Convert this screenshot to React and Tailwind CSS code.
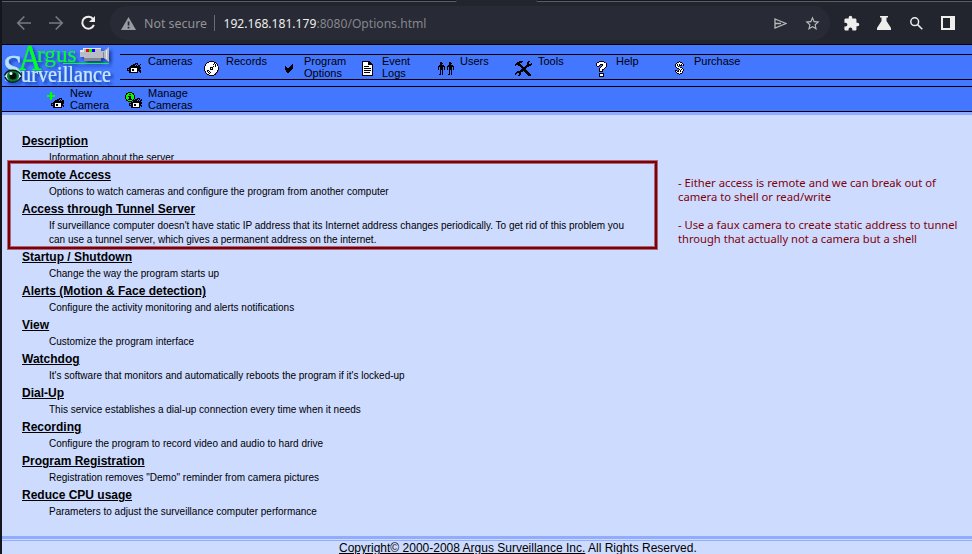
import React from "react";

const COLORS = { "#": "#000", o: "#fff", g: "#0f0", p: "#a0209a" };

function PixelIcon({ rows, className = "" }) {
  const w = Math.max(...rows.map((r) => r.length));
  return (
    <svg width={w} height={rows.length} viewBox={`0 0 ${w} ${rows.length}`} shapeRendering="crispEdges" className={"block shrink-0 " + className}>
      {rows.flatMap((r, y) =>
        [...r].map((c, x) => (COLORS[c] ? <rect key={x + "-" + y} x={x} y={y} width="1" height="1" fill={COLORS[c]} /> : null))
      )}
    </svg>
  );
}

const camera = [
  "........###...",
  "......###.#..#",
  "....####.#.##.",
  "...##########.",
  "..############",
  "####oooooo####",
  "#.##o##ooo###.",
  "####o##ooo####",
  "..##oooooo#.##",
  "..#########..#",
];

const disc = [
  ".....#####.....",
  "...##ooooo##...",
  "..#ooooooo#o#..",
  ".#ooooooo#o#o#.",
  ".#ooooooooo#o#.",
  "#oooooooo#o#oop",
  "#ooooo###ooooo#",
  "#ooooo#o#ooooo#",
  "#ooooo###ooooo#",
  "#oo##oooooooo#p",
  ".#o#o#ooooooo#.",
  ".#oo#o#ooooo#p.",
  "..#oo#ooooo#p..",
  "...##ooooo##...",
  ".....#####.....",
];

const check = [
  ".......#",
  "......##",
  "#....###",
  "##..####",
  "########",
  "#######.",
  ".#####..",
  ".####...",
  "..##....",
];

const page = [
  "########...",
  "#ooooo###..",
  "#ooooo####.",
  "#ooooo#####",
  "#ooooooooo#",
  "#o#####ooo#",
  "#ooooooooo#",
  "#o#######o#",
  "#ooooooooo#",
  "#o#######o#",
  "#ooooooooo#",
  "#o######oo#",
  "#ooooooooo#",
  "#ooooooooo#",
  "###########",
];

const person = [
  "..##...",
  "..###..",
  "..##...",
  ".#####.",
  "#######",
  "#.###.#",
  "#.###.#",
  "#.###.#",
  "..#.#..",
  "..#.#..",
  "..#.#..",
  "..#.#..",
  ".##.#..",
];
const people = person.map((r) => r + ".." + r);

const tools = [
  "....####.....##..",
  "..#####.....##...",
  ".####.......##..#",
  "######......#####",
  "#..####....#####.",
  ".....###..####...",
  "......######.....",
  ".......####......",
  "......#####......",
  ".....#######.....",
  "..######.####....",
  ".#####....####...",
  "##..##.....####..",
  "#...##......####.",
  "...##........###.",
];

const help = [
  "...#####...",
  ".##ooooo#p.",
  "#ooooooooo#",
  "#ooo###ooo#",
  "#oo#p.#ooo#",
  ".##p.#oooo#",
  "....#oooo#.",
  "...#oooo#..",
  "...#oo##...",
  "...#oo#....",
  "...####....",
  "...........",
  "...#####...",
  "...#ooo#...",
  "...#ooo#...",
  "...#####...",
];

const dollar = [
  "....#....",
  "..##o##..",
  ".#ooooo#.",
  "#o#o#o#o#",
  "#o#o###.#",
  "#oo#.....",
  ".#ooo##..",
  "..##ooo#.",
  "....#o#o#",
  "##.#o#oo#",
  "#o##o#o#.",
  ".#ooooo#.",
  "..##o##..",
  "....#....",
];

const newCamera = [
  "...gg............",
  "...gg............",
  "...gg............",
  "gggggggg.........",
  "gggggggg.........",
  "...gg............",
  "...gg.......###..",
  "...gg.....###.#..",
  "........####.#.##",
  ".......##########",
  "......###########",
  "....####oooooo###",
  "....#.##o##ooo##.",
  "....####o##ooo###",
  "......##oooooo#.#",
  "......#########..",
];

const manageCamera = [
  "...####..........",
  ".##gggg##........",
  ".#gg##gg#........",
  "#gggggggg#.......",
  "#gg###ggg#.......",
  "#ggg##ggg#.......",
  "#ggg##ggg#..###..",
  ".#g####g#.###.#.#",
  ".##gggg#####.#.##",
  "...####.########.",
  "......###########",
  "....####oooooo###",
  "....#.##o##ooo##.",
  "....####o##ooo###",
  "......##oooooo#.#",
  "......#########..",
];

const menu = [
  { label: ["Cameras"], rows: camera, pos: "pl-[7px] pt-[8px]" },
  { label: ["Records"], rows: disc, pos: "pl-[6px] pt-[6px]" },
  { label: ["Program", "Options"], rows: check, pos: "pl-[9px] pt-[9px]" },
  { label: ["Event", "Logs"], rows: page, pos: "pl-[8px] pt-[6px]" },
  { label: ["Users"], rows: people, pos: "pl-[6px] pt-[7px]" },
  { label: ["Tools"], rows: tools, pos: "pl-[5px] pt-[6px]" },
  { label: ["Help"], rows: help, pos: "pl-[8px] pt-[6px]" },
  { label: ["Purchase"], rows: dollar, pos: "pl-[9px] pt-[6px]" },
];

const submenu = [
  { label: ["New", "Camera"], rows: newCamera, pos: "pl-[5px] pt-[5px]" },
  { label: ["Manage", "Cameras"], rows: manageCamera, pos: "pl-[5px] pt-[5px]" },
];

function MenuItem({ item }) {
  return (
    <a className="flex w-[78px] shrink-0">
      <span className={"w-7 shrink-0 " + item.pos}>
        <PixelIcon rows={item.rows} />
      </span>
      <span className="text-[11px] leading-[12px]">
        {item.label.map((t) => (
          <span key={t} className="block">{t}</span>
        ))}
      </span>
    </a>
  );
}

const options = [
  ["Description", "Information about the server"],
  ["Remote Access", "Options to watch cameras and configure the program from another computer"],
  ["Access through Tunnel Server", "If surveillance computer doesn't have static IP address that its Internet address changes periodically. To get rid of this problem you can use a tunnel server, which gives a permanent address on the internet."],
  ["Startup / Shutdown", "Change the way the program starts up"],
  ["Alerts (Motion & Face detection)", "Configure the activity monitoring and alerts notifications"],
  ["View", "Customize the program interface"],
  ["Watchdog", "It's software that monitors and automatically reboots the program if it's locked-up"],
  ["Dial-Up", "This service establishes a dial-up connection every time when it needs"],
  ["Recording", "Configure the program to record video and audio to hard drive"],
  ["Program Registration", "Registration removes \"Demo\" reminder from camera pictures"],
  ["Reduce CPU usage", "Parameters to adjust the surveillance computer performance"],
];

function Logo() {
  return (
    <svg width="118" height="41" viewBox="2 45 118 41" className="block shrink-0 overflow-visible" fontFamily="'Liberation Serif', serif">
      <defs>
        <filter id="shade" x="-10%" y="-10%" width="130%" height="130%">
          <feDropShadow dx="2.500" dy="2.500" stdDeviation="1.500" floodColor="#0a2a90" floodOpacity="0.800" />
        </filter>
      </defs>
      <g filter="url(#shade)">
        <text x="3" y="82" fontSize="39" fill="#b8e4ff" stroke="#b8e4ff" strokeWidth="0.400" textLength="20" lengthAdjust="spacingAndGlyphs">S</text>
        <text x="21" y="82" fontSize="23" fill="#c4e8ff" stroke="#c4e8ff" strokeWidth="0.200" textLength="90" lengthAdjust="spacingAndGlyphs">urveillance</text>
        <text x="18.500" y="70" fontSize="36" fill="#00ff20" stroke="#00ff20" strokeWidth="0.300" textLength="23" lengthAdjust="spacingAndGlyphs">A</text>
        <text x="37" y="61.500" fontSize="23" fill="#00ff20" textLength="39.500" lengthAdjust="spacingAndGlyphs">rgus</text>
        <path d="M63 63.500H109" stroke="#00ff20" />
        <path d="M80 50h3v-2h18v3h3l5-4v15l-5-4h-3v3H84v-4h-4z" fill="#b9bcc4" />
      </g>
      <path d="M80 50h3v-2h18v1H84v3h-4z" fill="#e4e6ec" />
      <path d="M84 58h17v3H84zM103 52h1v6h-1z" fill="#858891" />
      <path d="M86 49h3v3h-3z" fill="#f00" />
      <path d="M89 49h3v3h-3z" fill="#0f0" />
      <path d="M92 49h3v3h-3z" fill="#00f" />
      <path d="M106 50h1v9h-1z" fill="#e4e6ec" />
      <ellipse cx="13" cy="76" rx="8" ry="5.500" fill="#d7eef8" />
      <circle cx="13" cy="76" r="6" fill="#087a35" />
      <circle cx="13" cy="76" r="3.600" fill="#001108" />
      <circle cx="11" cy="73.500" r="1.500" fill="#fff" />
      <path d="M4.500 75.500c3-7 13-7 17 0M5 77c3 7 12 7 16 0" fill="none" stroke="#02170c" strokeWidth="1.500" />
    </svg>
  );
}

function Arrow({ flip }) {
  return (
    <svg width="16" height="16" viewBox="0 0 16 16" fill="none" stroke="#777980" strokeWidth="1.700" className={flip ? "rotate-180" : ""}>
      <path d="M15 8H2M8.300 1.500L1.800 8l6.500 6.500" />
    </svg>
  );
}

function BrowserBar() {
  return (
    <header className="h-[45px] bg-[#23252e] border-b border-black font-['Noto_Sans',sans-serif]">
      <div className="flex h-[2px] justify-between bg-[#23252e]">
        <div className="w-[455px] rounded-br border-b border-[#5b5d64] bg-[#15171d]" />
        <div className="w-[436px] rounded-bl border-b border-[#5b5d64] bg-[#15171d]" />
      </div>
      <div className="flex h-[42px] items-center pl-[14px]">
        <Arrow />
        <span className="ml-4 flex"><Arrow flip /></span>
        <svg width="16" height="16" viewBox="0 0 16 16" className="ml-4" fill="none" stroke="#eeeeec" strokeWidth="2">
          <path d="M13.200 4.200A6 6 0 1 0 13.900 9.800" />
          <path d="M15 1v6H9z" fill="#eeeeec" stroke="none" />
        </svg>
        <div className="ml-[14px] flex h-[34px] w-[720px] shrink-0 items-center rounded-full bg-[#282a35] pl-[11px]">
          <svg width="15" height="13" viewBox="0 0 15 13" className="shrink-0">
            <path d="M7.500 0L15 13H0z" fill="#9a9ca1" />
            <path d="M6.700 4.500h1.700v4H6.700zM6.700 9.700h1.700v1.700H6.700z" fill="#282a35" />
          </svg>
          <svg width="300" height="20" className="ml-2 shrink-0" fontSize="13.300">
            <text x="0" y="15" fill="#929398" textLength="63" lengthAdjust="spacingAndGlyphs">Not secure</text>
            <path d="M70.500 2V18" stroke="#6b6c73" />
            <text x="79.500" y="15" fill="#85868d" textLength="203" lengthAdjust="spacingAndGlyphs">
              <tspan fill="#eeeeec">192.168.181.179</tspan>:8080/Options.html
            </text>
          </svg>
          <svg width="13" height="11" viewBox="0 0 13 11" className="ml-[330px] shrink-0" fill="none" stroke="#babbbc" strokeWidth="1.300">
            <path d="M1 1l11 4.500L1 10zM1 5.500h6" />
          </svg>
          <svg width="17" height="17" viewBox="0 0 24 24" className="ml-[17px] shrink-0" fill="#babbbc">
            <path d="M22 9.240l-7.190-.620L12 2 9.190 8.630 2 9.240l5.460 4.730L5.820 21 12 17.270 18.180 21l-1.630-7.030L22 9.240zM12 15.400l-3.760 2.270 1-4.280-3.320-2.880 4.380-.380L12 6.100l1.710 4.040 4.380.380-3.320 2.880 1 4.280L12 15.400z" />
          </svg>
        </div>
        <svg width="17" height="17" viewBox="0 0 24 24" className="ml-[13px] shrink-0" fill="#eeeeec">
          <path d="M20.500 11H19V7c0-1.100-.900-2-2-2h-4V3.500a2.500 2.500 0 0 0-5 0V5H4c-1.100 0-1.990.900-1.990 2v3.800H3.500a2.700 2.700 0 0 1 0 5.400H2V20c0 1.100.900 2 2 2h3.800v-1.500a2.700 2.700 0 0 1 5.400 0V22H17c1.100 0 2-.900 2-2v-4h1.500a2.500 2.500 0 0 0 0-5z" />
        </svg>
        <svg width="14" height="14" viewBox="0 0 14 14" className="ml-[17px] shrink-0" fill="#eeeeec">
          <path d="M3 0h8v1.500H9.500V5L14 12v2H0v-2L4.500 5V1.500H3z" />
        </svg>
        <svg width="13" height="13" viewBox="0 0 13 13" className="ml-[19px] shrink-0" fill="none" stroke="#eeeeec" strokeWidth="1.500">
          <circle cx="4.700" cy="4.700" r="3.900" />
          <path d="M7.600 7.600L12.300 12.300" />
        </svg>
        <svg width="14" height="14" viewBox="0 0 14 14" className="ml-[18px] shrink-0">
          <path d="M0 0h14v14H0zM2 2v10h7V2z" fill="#eeeeec" fillRule="evenodd" />
        </svg>
      </div>
    </header>
  );
}

export default function App() {
  return (
    <div className="relative h-[554px] w-[972px] overflow-hidden border-l-2 border-[#14161e] bg-[#cddbff] font-['Liberation_Sans',Arial,sans-serif] text-black">
      <BrowserBar />
      <div className="flex h-[41px] bg-[#4479ff]">
        <Logo />
        <nav className="mt-[9px] flex h-[26px] grow border-y border-black bg-[#4477ff]">
          {menu.map((m) => <MenuItem key={m.label[0]} item={m} />)}
        </nav>
      </div>
      <nav className="flex h-[26px] border-y border-black bg-[#4477ff] pl-10">
        {submenu.map((m) => <MenuItem key={m.label[0]} item={m} />)}
      </nav>
      <div className="h-[3px] bg-[#90acff]" />
      <main className="flex h-[421px] pt-[16px]">
        <dl className="w-[612px] shrink-0 pl-5">
          {options.map(([title, text]) => (
            <React.Fragment key={title}>
              <dt className="h-5 text-[12px] font-bold leading-[21px]">
                <a className="underline">{title}</a>
              </dt>
              <dd className="ml-[27px] -mr-4 w-[581px] text-[10px] leading-[14px]">{text}</dd>
            </React.Fragment>
          ))}
        </dl>
        <svg width="290" height="80" className="ml-[62px] mt-[43px] shrink-0" fontFamily="'Noto Sans', sans-serif" fontSize="11.500" fill="#800008">
          <text x="2" y="13" textLength="258" lengthAdjust="spacingAndGlyphs">- Either access is remote and we can break out of</text>
          <text x="2" y="27" textLength="153" lengthAdjust="spacingAndGlyphs">camera to shell or read/write</text>
          <text x="2" y="55" textLength="279.500" lengthAdjust="spacingAndGlyphs">- Use a faux camera to create static address to tunnel</text>
          <text x="2" y="69" textLength="239" lengthAdjust="spacingAndGlyphs">through that actually not a camera but a shell</text>
        </svg>
      </main>
      <div className="h-[3px] bg-[#90acff]" />
      <div className="mt-px h-px bg-[#90acff]" />
      <footer className="whitespace-nowrap pl-[337px] text-[12px] leading-[14px]">
        <a className="underline">Copyright© 2000-2008 Argus Surveillance Inc.</a> All Rights Reserved.
      </footer>
      <div className="pointer-events-none absolute left-[5px] top-[160px] h-[90px] w-[651px] border border-[#a7677f]">
        <div className="h-full border-2 border-[#800000]">
          <div className="h-full border border-[#a7677f]" />
        </div>
      </div>
    </div>
  );
}
